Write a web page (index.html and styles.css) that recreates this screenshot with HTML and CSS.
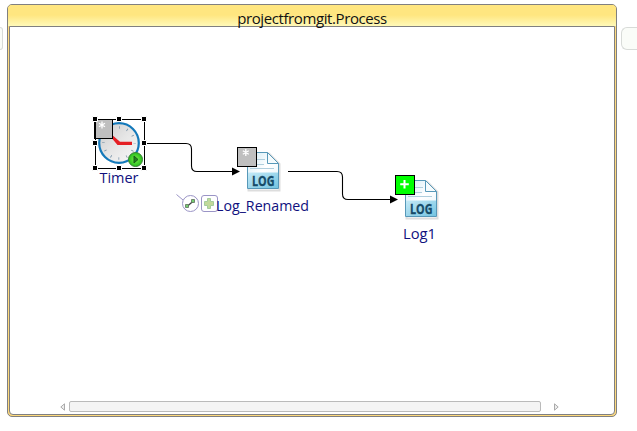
FILE: index.html
```html
<!DOCTYPE html>
<html lang="en">
<head>
<meta charset="utf-8">
<title>projectfromgit.Process</title>
<link rel="stylesheet" href="styles.css">
</head>
<body>
<div class="neighbor neighbor-left"></div>
<main class="process">
  <header class="title"><span>projectfromgit.Process</span></header>
  <section class="canvas">
    <div class="scrollbar">
      <svg width="5" height="8" viewBox="0 0 5 8"><path d="M4.500 .8V7.200L.8 4Z" fill="#eee" stroke="#aaa"/></svg>
      <div class="thumb"></div>
      <svg width="5" height="8" viewBox="0 0 5 8"><path d="M.5 .8V7.200L4.200 4Z" fill="#eee" stroke="#aaa"/></svg>
    </div>
  </section>
</main>
<div class="neighbor neighbor-right"></div>

<svg class="diagram" width="637" height="431" viewBox="0 0 637 431">
  <defs>
    <linearGradient id="paper" x1="0" y1="0" x2="1" y2="1"><stop offset="0" stop-color="#cfe9f4"/><stop offset=".5" stop-color="#fff"/><stop offset="1" stop-color="#e4f3f9"/></linearGradient>
    <linearGradient id="band" x1="0" y1="0" x2="1" y2="1"><stop offset="0" stop-color="#c5eaf7"/><stop offset="1" stop-color="#75c4e1"/></linearGradient>
    <linearGradient id="face" x1="0" y1="0" x2="1" y2="1"><stop offset="0" stop-color="#c9c9c9"/><stop offset=".5" stop-color="#e6e6e6"/><stop offset="1" stop-color="#fafafa"/></linearGradient>
    <radialGradient id="go"><stop offset="0" stop-color="#7cf04b"/><stop offset="1" stop-color="#25bd1b"/></radialGradient>
    <g id="log">
      <path d="M1.500 1.500H22L32.500 12V38.500H1.500Z" fill="none" stroke="#ddd" stroke-width="2"/>
      <path d="M.5 .5H20.500L31.500 11.500V36.500H.5Z" fill="url(#paper)" stroke="#5798b8"/>
      <path d="M1 20.500H31V36H1Z" fill="url(#band)"/>
      <path d="M3 7.500H18M3 12.500H17M3 16.500H27" stroke="#b0cedd"/>
      <path d="M20.500 .5V11.500H31.500Z" fill="#f5fbfd" stroke="#5798b8"/>
      <text x="5" y="34" textLength="22.500" lengthAdjust="spacingAndGlyphs" class="log-text">LOG</text>
    </g>
  </defs>

  <g fill="none" stroke="#000" stroke-width="1.100">
    <path d="M147 143.500H186Q191.500 143.500 191.500 149V166Q191.500 171.500 197 171.500H234"/>
    <path d="M288 171.500H337Q342.500 171.500 342.500 177V194Q342.500 199.500 348 199.500H391"/>
  </g>
  <path d="M232 167.500V175.500L240 171.500ZM390 195.500V203.500L398 199.500Z"/>

  <g>
    <circle cx="119" cy="143" r="19.800" fill="url(#face)" stroke="#1479ba" stroke-width="2.200"/>
    <circle cx="119" cy="143" r="15.500" fill="none" stroke="#7993a8" stroke-width="2.600" stroke-dasharray=".8 7.316" stroke-dashoffset=".4"/>
    <path d="M132 141.800H120L111 134L110 136L117.500 145H132Z" fill="#e52025"/>
    <rect x="94.500" y="119.500" width="18" height="19" fill="#bfbfbf" stroke="#000"/>
    <path d="M102 121.500V128.500M99 123.300L105 126.700M99 126.700L105 123.300" stroke="#fff" stroke-width="1.300"/>
    <circle cx="135.500" cy="159.500" r="7" fill="url(#go)" stroke="#3a7d38"/>
    <path d="M134 156V163L138 159.500Z" fill="#20811c" stroke="#175b18"/>
    <rect x="95.500" y="119.500" width="49" height="49" fill="none" stroke="#000"/>
    <path d="M92.500 116.500h5v5h-5zM116.500 116.500h5v5h-5zM141.500 116.500h5v5h-5zM92.500 140.500h5v5h-5zM141.500 140.500h5v5h-5zM92.500 165.500h5v5h-5zM116.500 165.500h5v5h-5zM141.500 165.500h5v5h-5z" stroke="#fff"/>
  </g>

  <use href="#log" x="247" y="152"/>
  <rect x="237.500" y="147.500" width="19" height="19" fill="#bfbfbf" stroke="#000"/>
  <path d="M245.800 149V156M242.800 150.800L248.800 154.200M242.800 154.200L248.800 150.800" stroke="#fff" stroke-width="1.300"/>

  <use href="#log" x="405" y="180"/>
  <rect x="395.500" y="175.500" width="19" height="19" fill="#0f0" stroke="#000"/>
  <path d="M404.500 180V188.500M400.200 184.300H408.800" stroke="#fff" stroke-width="2"/>

  <g fill="none">
    <path d="M176.500 194.500L183 200" stroke="#9a94c6"/>
    <circle cx="190.500" cy="203.500" r="8" fill="#fff" stroke="#9a94c6"/>
    <path d="M187 206.500L194 200.500" stroke="#444" stroke-width="1.300"/>
    <path d="M185.500 204.500h3v3h-3zM191.500 199.500h3v3h-3z" fill="#74cf70" stroke="#607060" stroke-width=".8"/>
    <rect x="201.500" y="195.500" width="16" height="16" rx="2.500" fill="#fff" stroke="#9a94c6"/>
    <path d="M207.500 198.500h3v3h3v4h-3v3h-3v-3h-3v-4h3z" fill="#c2d99b" stroke="#a4cc9d"/>
  </g>

  <g class="label">
    <text x="99.500" y="183" textLength="39" lengthAdjust="spacingAndGlyphs">Timer</text>
    <text x="216" y="211" textLength="93" lengthAdjust="spacingAndGlyphs">Log_Renamed</text>
    <text x="403" y="239" textLength="33" lengthAdjust="spacingAndGlyphs">Log1</text>
  </g>
</svg>
</body>
</html>
```

FILE: styles.css
```css
* { box-sizing: border-box; }
body {
  margin: 0;
  width: 637px;
  height: 431px;
  overflow: hidden;
  display: flex;
  align-items: flex-start;
  background: #fff;
  font-family: "Open Sans", "Noto Sans", sans-serif;
}
.neighbor {
  flex: none;
  height: 23px;
  margin-top: 27px;
  background: #fafcf8;
  border: 1px solid #d8dbd8;
}
.neighbor-left {
  width: 3px;
  margin-right: 4px;
  border-left: 0;
  border-radius: 0 6px 6px 0;
}
.neighbor-right {
  width: 16px;
  margin-left: 4px;
  border-right: 0;
  border-radius: 6px 0 0 6px;
}
.process {
  flex: none;
  width: 610px;
  height: 413px;
  margin-top: 4px;
  padding: 0 1px 1px;
  display: flex;
  flex-direction: column;
  border: 1px solid #808080;
  border-radius: 5px;
  background: #ffda7c;
}
.title {
  height: 21px;
  margin: 0 -1px;
  display: flex;
  justify-content: center;
  border-radius: 4px 4px 0 0;
  background: linear-gradient(#ffe680 0, #ffe680 48%, #fff9b8 100%);
  color: #111;
  font-size: 15px;
  line-height: 27px;
  white-space: nowrap;
}
.title span {
  position: relative;
  z-index: 1;
  letter-spacing: -0.4px;
}
.canvas {
  flex: 1;
  display: flex;
  align-items: flex-end;
  background: #fff;
  border: 1px solid #808080;
  border-radius: 0 0 4px 4px;
}
.scrollbar {
  display: flex;
  align-items: center;
  margin: 0 0 2px 50px;
}
.thumb {
  width: 472px;
  height: 11px;
  margin: 0 13px 0 4px;
  background: #f4f4f4;
  border: 1px solid #bababa;
  border-radius: 2px;
}
.diagram {
  position: absolute;
  top: 0;
  left: 0;
}
.label { fill: #10107e; font-size: 15px; }
.log-text {
  fill: #164b68;
  stroke: #164b68;
  stroke-width: .3px;
  font: bold 14px "Open Sans", "Noto Sans", sans-serif;
}
```
